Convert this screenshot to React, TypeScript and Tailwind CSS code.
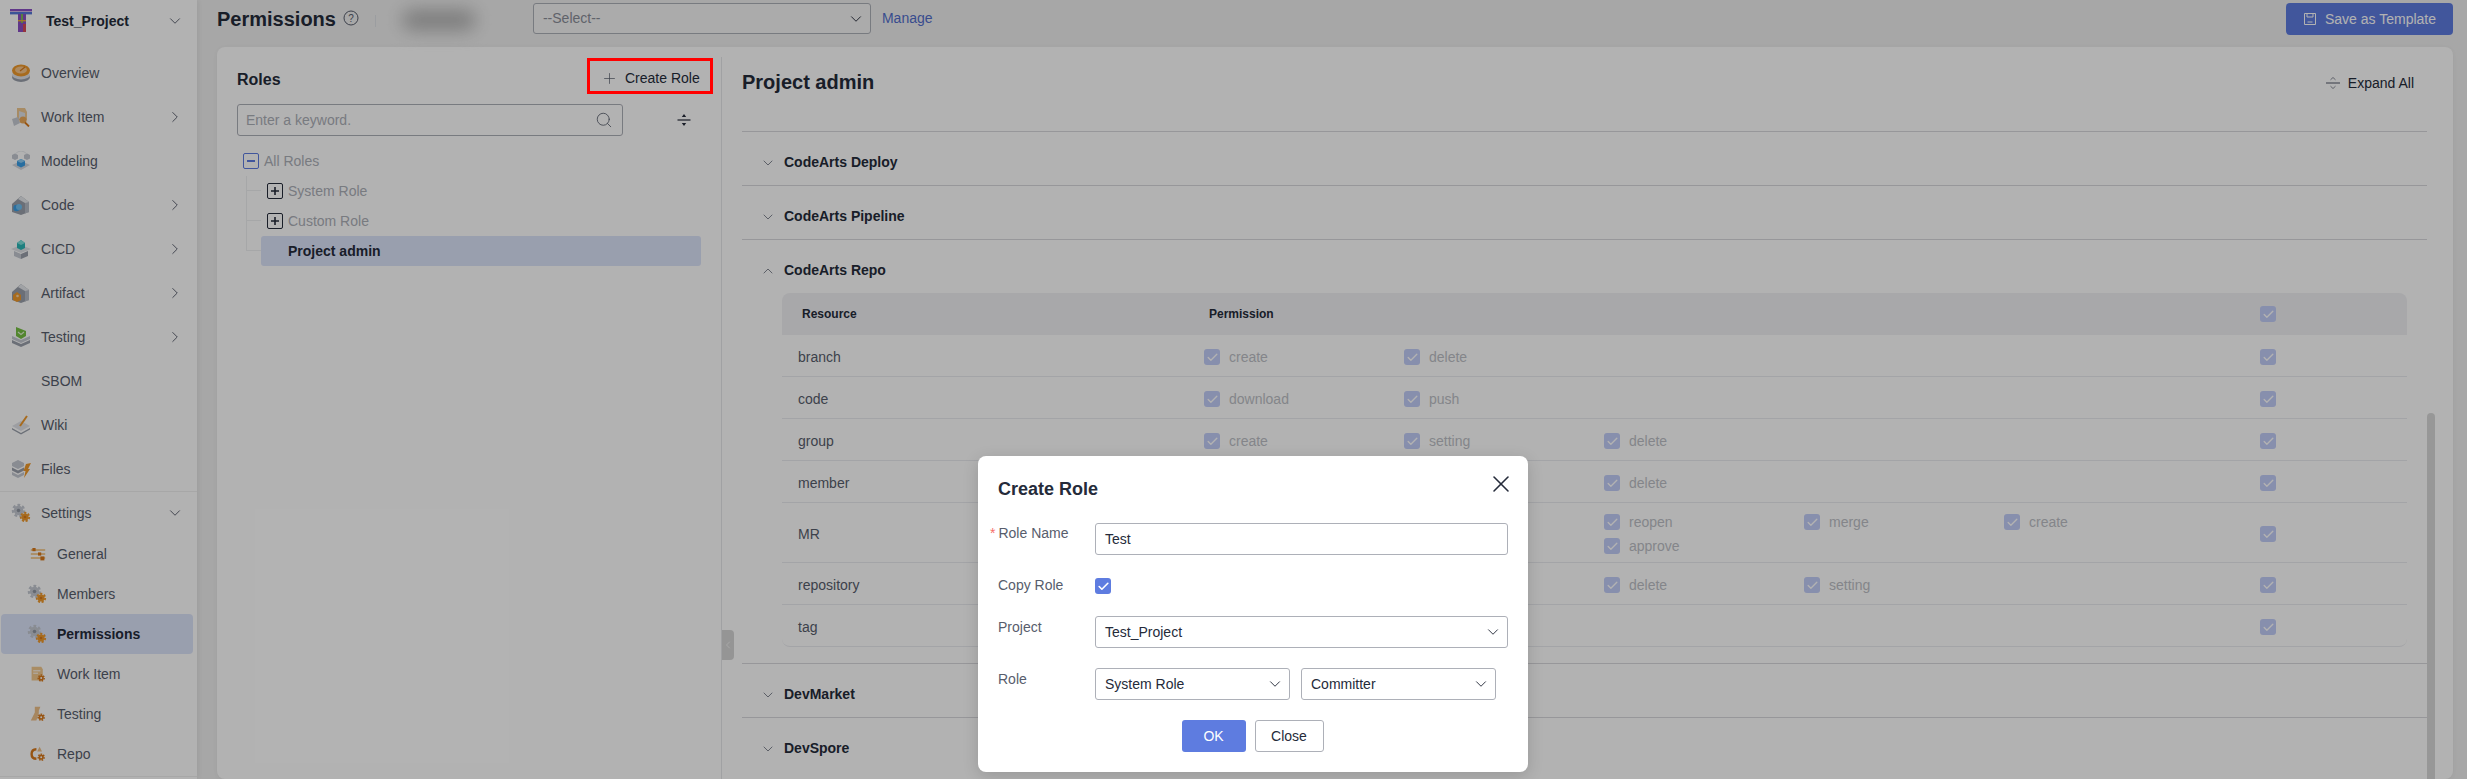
import React from "react";
import { ChevronDown, ChevronRight, ChevronUp, ChevronLeft, Search, Plus, X, Check } from "lucide-react";

const G = "#c4c9d2", GD = "#9aa0ab", O = "#f09a2c", OD = "#d9791a";

function Gear({ x, y, r, c, h = "#fff" }: { x: number; y: number; r: number; c: string; h?: string }) {
  return (
    <g>
      <circle cx={x} cy={y} r={r} fill="none" stroke={c} strokeWidth={r * 0.45} strokeDasharray={`${r * 0.5} ${r * 0.38}`} />
      <circle cx={x} cy={y} r={r * 0.85} fill={c} />
      <circle cx={x} cy={y} r={r * 0.32} fill={h} />
    </g>
  );
}

const Svg = ({ children, size = 20 }: { children: React.ReactNode; size?: number }) => (
  <svg width={size} height={size} viewBox="0 0 20 20" className="shrink-0">{children}</svg>
);

const House = ({ inner }: { inner: React.ReactNode }) => (
  <>
    <path d="M1 9 L10 1 L18 7 L18 17 L10 20 L1 17 Z" fill={GD} />
    <path d="M10 1 L18 7 L18 17 L14 18.5 L14 8 L7 4 Z" fill="#e6e8ec" />
    <path d="M14 8 L18 7 L18 17 L14 18.5 Z" fill="#b7bcc6" />
    {inner}
  </>
);

const icons: Record<string, React.ReactNode> = {
  overview: (
    <Svg>
      <ellipse cx="10" cy="14" rx="9" ry="5" fill={GD} />
      <ellipse cx="10" cy="12" rx="9" ry="4.4" fill="#e1e3e8" />
      <ellipse cx="10" cy="7.5" rx="9" ry="6" fill={O} />
      <ellipse cx="10" cy="7" rx="6" ry="3.4" fill="#f8c68a" />
      <path d="M9 8 L14 4" stroke={OD} strokeWidth="1.3" />
    </Svg>
  ),
  work: (
    <Svg>
      <path d="M6 1 L14 1 L16 5 L16 13 L6 13 Z" fill="#f0c890" />
      <path d="M8 4 L14 6 L14 13 L8 12 Z" fill="#dfe2e8" />
      <path d="M1 12 L7 10 L9 16 L3 19 Z" fill="#c8ccd4" />
      <circle cx="12" cy="13" r="3.6" fill="#eba95a" />
      <path d="M14 15.5 L18 19.5" stroke={OD} strokeWidth="1.8" />
    </Svg>
  ),
  model: (
    <Svg>
      <path d="M1 14 L10 10 L19 14 L10 19 Z" fill="#d4d7de" />
      <path d="M1 4 L4 2.4 L7 4 L7 7.5 L4 9 L1 7.5 Z" fill={G} />
      <path d="M13 4 L16 2.4 L19 4 L19 7.5 L16 9 L13 7.5 Z" fill={G} />
      <path d="M4 3 Q10 -3 16 3" stroke="#e8eaee" strokeWidth="1" fill="none" />
      <path d="M6 10 L10 8 L14 10 L14 14.5 L10 16.5 L6 14.5 Z" fill="#3a9ee6" />
      <path d="M6 10 L10 12 L14 10 L10 8 Z" fill="#8fcdf5" />
    </Svg>
  ),
  code: <Svg><House inner={<><circle cx="5.5" cy="13" r="3.2" fill="#3a9ee6" /><circle cx="8" cy="12" r="3" fill="#6fc0f2" /></>} /></Svg>,
  cicd: (
    <Svg>
      <path d="M0 10 L10 6 L20 10 L10 14 Z" fill="#dfe1e6" />
      <path d="M3 12 L10 15 L10 20 L3 17 Z" fill={G} />
      <path d="M17 12 L10 15 L10 20 L17 17 Z" fill={GD} />
      <path d="M6 4 L10 1 L14 4 L14 9 L10 11 L6 9 Z" fill="#2bb6b6" />
      <path d="M6 4 L10 6 L14 4 L10 1 Z" fill="#7fe0dc" />
    </Svg>
  ),
  artifact: <Svg><House inner={<><path d="M2 12 L6 9 L10 12 L10 17 L6 19 L2 17 Z" fill={O} /><circle cx="6.5" cy="13" r="1.3" fill="#f8d6a6" /></>} /></Svg>,
  testing: (
    <Svg>
      <path d="M5 0 L15 4 L15 9 L10 12 L5 9 Z" fill="#76c043" />
      <path d="M7 5 L10 7.5 L13 5" stroke="#e6f5d8" strokeWidth="1.2" fill="none" />
      <path d="M1 9 L10 13 L19 9 L19 12 L10 16 L1 12 Z" fill={G} />
      <path d="M1 13 L10 17 L19 13 L19 16 L10 20 L1 16 Z" fill={GD} />
    </Svg>
  ),
  wiki: (
    <Svg>
      <path d="M1 11 L10 6 L19 11 L10 16 Z" fill="#e1e3e8" />
      <path d="M1 13 L10 18 L19 13 L19 14.5 L10 19.5 L1 14.5 Z" fill={GD} />
      <path d="M9 11 L16 1" stroke={O} strokeWidth="2" />
    </Svg>
  ),
  files: (
    <Svg>
      <path d="M1 4 L7 1 L13 4 L13 7 L7 10 L1 7 Z" fill={G} />
      <path d="M1 8.5 L7 11.5 L13 8.5 L13 11.5 L7 14.5 L1 11.5 Z" fill={GD} />
      <path d="M1 13 L7 16 L13 13 L13 16 L7 19 L1 16 Z" fill={G} />
      <path d="M15 5 L20 4 L17 10 L19 10 L13 19 L14.5 12 L12.5 12 Z" fill={O} />
    </Svg>
  ),
  gears: (
    <Svg>
      <Gear x={7.5} y={7.5} r={5.5} c={G} h="#8f95a1" />
      <Gear x={14} y={14} r={4.2} c={O} h={OD} />
    </Svg>
  ),
  sliders: (
    <Svg size={16}>
      <path d="M1 5 H19 M1 10 H19 M1 15 H19" stroke="#f2c078" strokeWidth="1.6" />
      <rect x="3" y="2.5" width="4" height="4" fill={OD} />
      <rect x="10" y="8" width="4" height="4" fill={OD} />
      <rect x="13" y="13" width="5" height="5" fill={OD} />
    </Svg>
  ),
  subwork: (
    <Svg size={16}>
      <path d="M2 1 H14 L16 4 V18 H2 Z" fill="#f2c98f" />
      <path d="M4 6 H13 M4 9 H10" stroke="#fff" strokeWidth="1.2" />
      <Gear x={14} y={15} r={3.8} c={OD} />
    </Svg>
  ),
  subtest: (
    <Svg size={16}>
      <path d="M6 1 H13 L11 6 V9 L8 18 H1 L6 8 Z" fill="#eec088" />
      <Gear x={14} y={14} r={3.8} c={OD} />
    </Svg>
  ),
  subrepo: (
    <Svg size={16}>
      <path d="M8 4 Q2 4 2 10 Q2 16 8 16" stroke={OD} strokeWidth="3" fill="none" />
      <path d="M12 1 L15 7 H9 Z" fill="#eec088" />
      <Gear x={14} y={14} r={3.8} c={OD} />
    </Svg>
  ),
};

function NavRow({ icon, label, arrow }: { icon?: string; label: string; arrow?: boolean }) {
  return (
    <div className="flex h-[44px] items-center text-[14px] text-[#575d6c]">
      <div className="flex w-[41px] justify-center pl-[1px]">{icon ? icons[icon] : null}</div>
      <span>{label}</span>
      {arrow && <ChevronRight size={18} strokeWidth={1.25} className="ml-auto mr-[13px] text-[#575d6c]" />}
    </div>
  );
}

function SubRow({ icon, label, active, big }: { icon: string; label: string; active?: boolean; big?: boolean }) {
  return (
    <div className={`flex h-[40px] w-[192px] items-center rounded-[4px] text-[14px] ${active ? "bg-[#dce4fa] font-bold text-[#252b3a]" : "text-[#575d6c]"}`}>
      <div className={`flex w-[56px] justify-center ${big ? "pl-[16px]" : "pl-[17px]"}`}>{icons[icon]}</div>
      <span>{label}</span>
    </div>
  );
}

function Sidebar() {
  return (
    <aside className="w-[197px] shrink-0 bg-white shadow-[2px_0_6px_rgba(0,0,0,0.06)]">
      <div className="flex h-[42px] items-center">
        <svg width="24" height="24" viewBox="0 0 24 24" className="ml-[9px] mt-[-1px] shrink-0">
          <rect x="1" y="0" width="22" height="2.4" fill="#8a4fc4" />
          <rect x="1" y="3" width="22" height="2.4" fill="#5577d8" />
          <rect x="9" y="5" width="8" height="18" fill="#8a4fc4" />
          <rect x="12" y="5" width="2" height="9" fill="#7fb957" />
          <rect x="9" y="11" width="8" height="1.4" fill="#e8a93a" />
          <rect x="14" y="15" width="3" height="8" fill="#d64a5a" />
        </svg>
        <span className="ml-[13px] text-[14px] font-bold text-[#252b3a]">Test_Project</span>
        <ChevronDown size={18} strokeWidth={1.25} className="ml-auto mr-[13px] text-[#575d6c]" />
      </div>
      <div className="mt-[9px] border-b border-[#f0f0f0]">
        <NavRow icon="overview" label="Overview" />
        <NavRow icon="work" label="Work Item" arrow />
        <NavRow icon="model" label="Modeling" />
        <NavRow icon="code" label="Code" arrow />
        <NavRow icon="cicd" label="CICD" arrow />
        <NavRow icon="artifact" label="Artifact" arrow />
        <NavRow icon="testing" label="Testing" arrow />
        <NavRow label="SBOM" />
        <NavRow icon="wiki" label="Wiki" />
        <NavRow icon="files" label="Files" />
      </div>
      <div className="flex h-[42px] items-center text-[14px] text-[#575d6c]">
        <div className="flex w-[41px] justify-center">{icons.gears}</div>
        <span>Settings</span>
        <ChevronDown size={18} strokeWidth={1.25} className="ml-auto mr-[13px]" />
      </div>
      <div className="ml-[1px]">
        <SubRow icon="sliders" label="General" />
        <SubRow icon="gears" label="Members" big />
        <SubRow icon="gears" label="Permissions" active big />
        <SubRow icon="subwork" label="Work Item" />
        <SubRow icon="subtest" label="Testing" />
        <SubRow icon="subrepo" label="Repo" />
      </div>
      <div className="mt-[2px] border-b border-[#f0f0f0]" />
    </aside>
  );
}

function Header() {
  return (
    <div className="flex h-[47px] items-start pl-[20px] pr-[14px] pt-[3px]">
      <h1 className="text-[20px] font-bold leading-[32px] text-[#252b3a]">Permissions</h1>
      <svg width="16" height="16" viewBox="0 0 16 16" className="ml-[7px] mt-[7px] text-[#575d6c]">
        <circle cx="8" cy="8" r="7" fill="none" stroke="currentColor" strokeWidth="1" />
        <text x="8" y="11.5" fontSize="10" textAnchor="middle" fill="currentColor" fontFamily="Liberation Sans">?</text>
      </svg>
      <div className="ml-[16px] mt-[12px] h-[12px] w-px bg-[#dfe1e6]" />
      <div className="ml-[20px] flex h-[34px] w-[137px] items-center justify-start">
        <div className="ml-[6px] h-[20px] w-[74px] rounded-full bg-[#b0b0b0] blur-[9px]" />
      </div>
      <div className="flex h-[31px] w-[338px] items-center rounded-[3px] border border-[#adb0b8] bg-[#f5f5f5] pl-[9px] pr-[5px] text-[14px] text-[#8a8e99]">
        <span>--Select--</span>
        <ChevronDown size={18} strokeWidth={1.25} className="ml-auto text-[#252b3a]" />
      </div>
      <span className="ml-[11px] mt-[5px] text-[14px] text-[#526ecc]">Manage</span>
      <button className="ml-auto flex h-[32px] w-[167px] items-center rounded-[4px] bg-[#5e7ce0] pl-[18px] text-[14px] text-white">
        <svg width="12" height="12" viewBox="0 0 12 12" className="mr-[9px]" fill="none" stroke="currentColor">
          <path d="M.5.5 H11.5 V11.5 H.5 Z" />
          <path d="M3 .5 V4 H9 V.5 M3.5 9 H8.5" />
        </svg>
        Save as Template
      </button>
    </div>
  );
}

function Box({ sign, active }: { sign: "+" | "-"; active?: boolean }) {
  return (
    <div className={`flex h-[16px] w-[16px] shrink-0 items-center justify-center rounded-[2px] border ${active ? "border-[#5e7ce0]" : "border-[#252b3a]"}`}>
      {sign === "-" ? (
        <div className="h-[2px] w-[8px] bg-[#5e7ce0]" />
      ) : (
        <svg width="10" height="10" viewBox="0 0 10 10"><path d="M5 1 V9 M1 5 H9" stroke="#252b3a" strokeWidth="1.6" /></svg>
      )}
    </div>
  );
}

function TreeTick({ last }: { last?: boolean }) {
  return (
    <div className="w-[15px] shrink-0">
      <div className="h-[15px] border-b border-l border-[#eeeff1]" />
      {!last && <div className="h-[15px] border-l border-[#eeeff1]" />}
    </div>
  );
}

function LeftPanel() {
  return (
    <div className="mt-[10px] w-[505px] shrink-0 border-r border-[#e6e7ea] pl-[20px] pt-[1px]">
      <div className="flex items-start justify-between pr-[9px]">
        <span className="mt-[12px] text-[16px] font-bold leading-[20px] text-[#252b3a]">Roles</span>
        <div className="flex h-[36px] w-[125px] items-center pl-[14px] pt-[4px] text-[14px] text-[#252b3a]">
          <Plus size={17} strokeWidth={1} className="mr-[7px] text-[#575d6c]" />
          Create Role
        </div>
      </div>
      <div className="mt-[10px] flex items-center">
        <div className="flex h-[32px] w-[386px] items-center rounded-[3px] border border-[#adb0b8] pl-[8px] pr-[9px] text-[14px] text-[#adb0b8]">
          <span>Enter a keyword.</span>
          <Search size={18} strokeWidth={1.1} className="ml-auto text-[#575d6c]" />
        </div>
        <svg width="16" height="16" viewBox="0 0 16 16" className="ml-[53px] text-[#252b3a]" fill="currentColor">
          <path d="M1.5 7.4 H14.5 V8.6 H1.5 Z" />
          <path d="M8 2 L10.2 5 H5.8 Z M8 14 L10.2 11 H5.8 Z" />
        </svg>
      </div>
      <div className="ml-[6px] mt-[10px]">
        <div className="flex h-[30px] items-center text-[14px] text-[#adb0b8]">
          <Box sign="-" active />
          <span className="ml-[5px]">All Roles</span>
        </div>
        <div className="ml-[3px]">
          <div className="flex h-[30px] items-stretch">
            <TreeTick />
            <div className="ml-[6px] flex items-center text-[14px] text-[#adb0b8]"><Box sign="+" /><span className="ml-[5px]">System Role</span></div>
          </div>
          <div className="flex h-[30px] items-stretch">
            <TreeTick />
            <div className="ml-[6px] flex items-center text-[14px] text-[#adb0b8]"><Box sign="+" /><span className="ml-[5px]">Custom Role</span></div>
          </div>
          <div className="flex h-[30px] items-stretch">
            <TreeTick last />
            <div className="flex w-[440px] items-center rounded-[3px] bg-[#dce4fa] pl-[27px] text-[14px] font-bold text-[#252b3a]">Project admin</div>
          </div>
        </div>
      </div>
    </div>
  );
}

function Cb({ solid }: { solid?: boolean }) {
  return (
    <div className={`flex h-[16px] w-[16px] shrink-0 items-center justify-center rounded-[3px] ${solid ? "bg-[#5e7ce0]" : "bg-[#c2cdf8]"}`}>
      <Check size={13} strokeWidth={solid ? 3 : 2.5} className="text-white" />
    </div>
  );
}

function Perm({ label }: { label: string }) {
  return (
    <div className="flex h-[24px] w-[200px] items-center text-[14px] text-[#bdbfc6]">
      {label ? <div className="ml-[-1px]"><Cb /></div> : null}
      <span className="ml-[9px]">{label}</span>
    </div>
  );
}

function Row({ name, perms, tall, last }: { name: string; perms: string[]; tall?: boolean; last?: boolean }) {
  return (
    <div className={`flex items-center border-b border-[#eaebef] pt-[3px] ${tall ? "h-[60px]" : "h-[42px]"} ${last ? "rounded-b-lg" : ""}`}>
      <div className="w-[423px] pl-[16px] text-[14px] text-[#575d6c]">{name}</div>
      <div className="flex w-[1000px] flex-wrap">
        {perms.map((p, i) => <Perm key={i} label={p} />)}
      </div>
      <div className="ml-[55px]"><Cb /></div>
    </div>
  );
}

function Acc({ title, open, children }: { title: string; open?: boolean; children?: React.ReactNode }) {
  const I = open ? ChevronUp : ChevronDown;
  return (
    <div className="border-t border-[#d8d9dd]">
      <div className="flex h-[53px] items-center pl-[18px] pt-[8px] text-[14px] font-bold text-[#252b3a]">
        <I size={16} strokeWidth={1.1} className="mr-[8px] text-[#575d6c]" />
        {title}
      </div>
      {children}
    </div>
  );
}

function RightPanel() {
  return (
    <div className="relative flex-1 pl-[20px]">
      <div className="flex h-[84px] w-[1685px] items-start justify-between pr-[13px] pt-[23px]">
        <span className="text-[20px] font-bold leading-[24px] text-[#252b3a]">Project admin</span>
        <div className="flex h-[26px] items-center text-[14px] text-[#252b3a]">
          <svg width="14" height="14" viewBox="0 0 14 14" className="mr-[8px] text-[#8a8e99]" fill="none" stroke="currentColor">
            <path d="M0 7 H14" strokeWidth="1.5" />
            <path d="M4.5 3.8 L7 1.5 L9.5 3.8 M4.5 10.2 L7 12.5 L9.5 10.2" strokeWidth="1" />
          </svg>
          Expand All
        </div>
      </div>
      <div className="w-[1685px]">
        <Acc title="CodeArts Deploy" />
        <Acc title="CodeArts Pipeline" />
        <Acc title="CodeArts Repo" open>
          <div className="mb-[16px] ml-[40px] mr-[20px]">
            <div className="flex h-[42px] items-center rounded-t-lg bg-[#f1f1f4] text-[12px] font-bold text-[#252b3a]">
              <div className="w-[427px] pl-[20px]">Resource</div>
              <div className="w-[1051px]">Permission</div>
              <Cb />
            </div>
            <Row name="branch" perms={["create", "delete"]} />
            <Row name="code" perms={["download", "push"]} />
            <Row name="group" perms={["create", "setting", "delete"]} />
            <Row name="member" perms={["create", "setting", "delete"]} />
            <Row name="MR" tall perms={["close", "comment", "reopen", "merge", "create", "review", "update", "approve"]} />
            <Row name="repository" perms={["create", "archive", "delete", "setting"]} />
            <Row name="tag" last perms={["create", "delete"]} />
          </div>
        </Acc>
        <Acc title="DevMarket" />
        <Acc title="DevSpore" />
      </div>
      <div className="absolute left-[1705px] top-[366px] h-[420px] w-[8px] rounded-t-full bg-[#d9d9d9]" />
      <div className="absolute left-[0px] top-[583px] flex h-[30px] w-[12px] items-center justify-center rounded-r-[4px] bg-[#d6d6d6]">
        <ChevronLeft size={16} strokeWidth={1.5} className="text-[#f7f7f7]" />
      </div>
    </div>
  );
}

function SelectBox({ value, className }: { value: string; className: string }) {
  return (
    <div className={`flex h-[32px] items-center rounded-[3px] border border-[#adb0b8] pl-[9px] pr-[5px] text-[14px] text-[#252b3a] ${className}`}>
      <span>{value}</span>
      <ChevronDown size={18} strokeWidth={1.25} className="ml-auto" />
    </div>
  );
}

function FormLabel({ children, className = "" }: { children: React.ReactNode; className?: string }) {
  return <div className={`w-[97px] shrink-0 text-[14px] leading-[20px] text-[#575d6c] ${className}`}>{children}</div>;
}

function Modal() {
  return (
    <div className="absolute left-[978px] top-[456px] h-[316px] w-[550px] rounded-[8px] bg-white px-[20px] pt-[21px] shadow-[0_4px_16px_rgba(0,0,0,0.15)]">
      <h2 className="text-[18px] font-bold leading-[24px] text-[#252b3a]">Create Role</h2>
      <X size={28} strokeWidth={1.3} className="absolute left-[509px] top-[14px] text-[#252b3a]" />
      <div className="mt-[22px] flex">
        <FormLabel><span className="ml-[-8px] mr-[3px] text-[14px] text-[#f66f6a]">*</span>Role Name</FormLabel>
        <div className="flex h-[32px] w-[413px] items-center rounded-[3px] border border-[#adb0b8] pl-[9px] text-[14px] text-[#252b3a]">Test</div>
      </div>
      <div className="mt-[20px] flex">
        <FormLabel>Copy Role</FormLabel>
        <div className="mt-[3px]"><Cb solid /></div>
      </div>
      <div className="mt-[21px] flex">
        <FormLabel className="mt-[1px]">Project</FormLabel>
        <SelectBox value="Test_Project" className="w-[413px]" />
      </div>
      <div className="mt-[20px] flex">
        <FormLabel className="mt-[1px]">Role</FormLabel>
        <SelectBox value="System Role" className="w-[195px]" />
        <SelectBox value="Committer" className="ml-[11px] w-[195px]" />
      </div>
      <div className="mt-[20px] flex justify-center gap-[9px] pr-[1px]">
        <button className="h-[32px] w-[64px] rounded-[3px] bg-[#5e7ce0] text-[14px] text-white">OK</button>
        <button className="h-[32px] w-[69px] rounded-[3px] border border-[#adb0b8] bg-white text-[14px] text-[#252b3a]">Close</button>
      </div>
    </div>
  );
}

export default function App() {
  return (
    <div className="relative flex h-[779px] w-[2467px] overflow-hidden bg-[#f0f0f0] font-['Liberation_Sans',Arial,sans-serif]">
      <Sidebar />
      <main className="flex min-w-0 flex-1 flex-col">
        <Header />
        <div className="ml-[20px] mr-[14px] flex flex-1 rounded-[8px] bg-white shadow-[0_1px_6px_rgba(0,0,0,0.06)]">
          <LeftPanel />
          <RightPanel />
        </div>
      </main>
      <div className="absolute inset-0 bg-black/30" />
      <div className="absolute left-[587px] top-[58px] h-[36px] w-[126px] border-[3px] border-[#ff0000]" />
      <Modal />
    </div>
  );
}
